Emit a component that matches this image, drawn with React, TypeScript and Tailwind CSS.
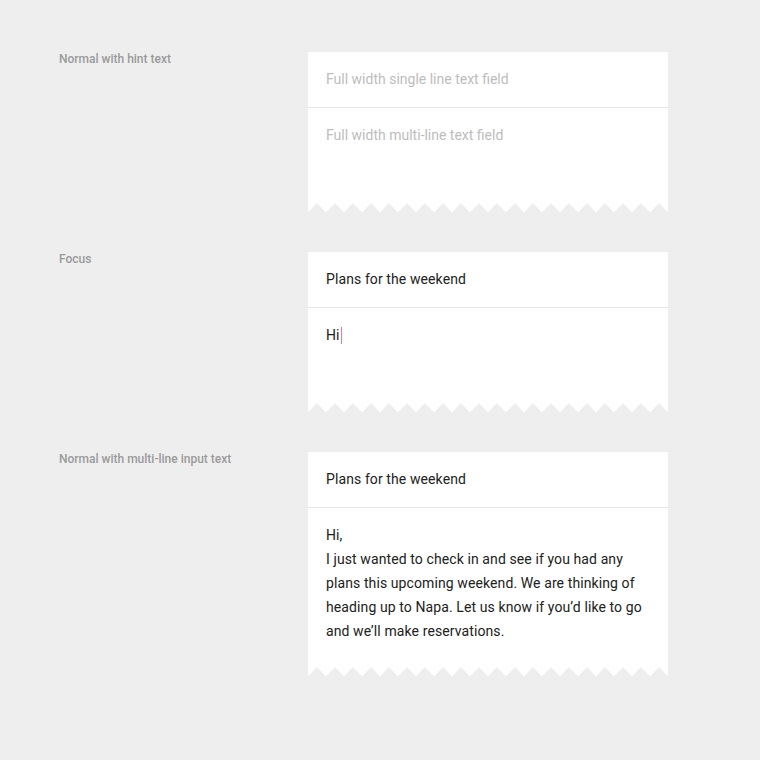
import React from "react";

const TEETH = Array.from({ length: 20 }, (_, i) => i);

function Zigzag() {
  return (
    <svg width="360" height="9" viewBox="0 0 360 9" className="block bg-white">
      {TEETH.map((i) => (
        <polygon key={i} points={`${i * 18},9.5 ${i * 18 + 9},0 ${i * 18 + 18},9.5`} fill="#eeeeee" />
      ))}
    </svg>
  );
}

interface FieldCardProps {
  subject: string;
  subjectHint?: boolean;
  children: React.ReactNode;
  bodyHeight: string;
}

function FieldCard({ subject, subjectHint, children, bodyHeight }: FieldCardProps) {
  return (
    <div className="w-[360px] bg-white">
      <div
        className={`h-[55px] px-[18px] flex items-center text-[14px] ${
          subjectHint ? "text-[#bdbdbd]" : "text-[#212121] tracking-[0.1px]"
        }`}
      >
        {subject}
      </div>
      <div className="h-px bg-[#e8e8e8]" />
      <div className={`px-[18px] pt-[15px] text-[14px] leading-[24px] ${bodyHeight}`}>{children}</div>
      <Zigzag />
    </div>
  );
}

function Section({ label, children }: { label: string; children: React.ReactNode }) {
  return (
    <div className="flex">
      <div className="w-[249px] pt-px text-[12px] leading-[12px] font-medium text-[#9a9a9a]">{label}</div>
      {children}
    </div>
  );
}

export default function App() {
  return (
    <div
      className="min-h-screen w-[760px] h-[760px] bg-[#eeeeee] pt-[52px] pl-[59px] flex flex-col gap-10"
      style={{ fontFamily: "Roboto, 'Noto Sans', sans-serif" }}
    >
      <Section label="Normal with hint text">
        <FieldCard subject="Full width single line text field" subjectHint bodyHeight="h-[95px]">
          <span className="text-[#bdbdbd]">Full width multi-line text field</span>
        </FieldCard>
      </Section>

      <Section label="Focus">
        <FieldCard subject="Plans for the weekend" bodyHeight="h-[95px]">
          <span className="text-[#212121] tracking-[0.1px] inline-flex items-center">
            Hi
            <span className="inline-block w-px h-[17px] bg-[#e57ba0] ml-px" />
          </span>
        </FieldCard>
      </Section>

      <Section label="Normal with multi-line input text">
        <FieldCard subject="Plans for the weekend" bodyHeight="h-[159px]">
          <div className="text-[#212121] tracking-[0.1px]">
            Hi,
            <br />
            I just wanted to check in and see if you had any
            <br />
            plans this upcoming weekend. We are thinking of
            <br />
            heading up to Napa. Let us know if you’d like to go
            <br />
            and we’ll make reservations.
          </div>
        </FieldCard>
      </Section>
    </div>
  );
}
